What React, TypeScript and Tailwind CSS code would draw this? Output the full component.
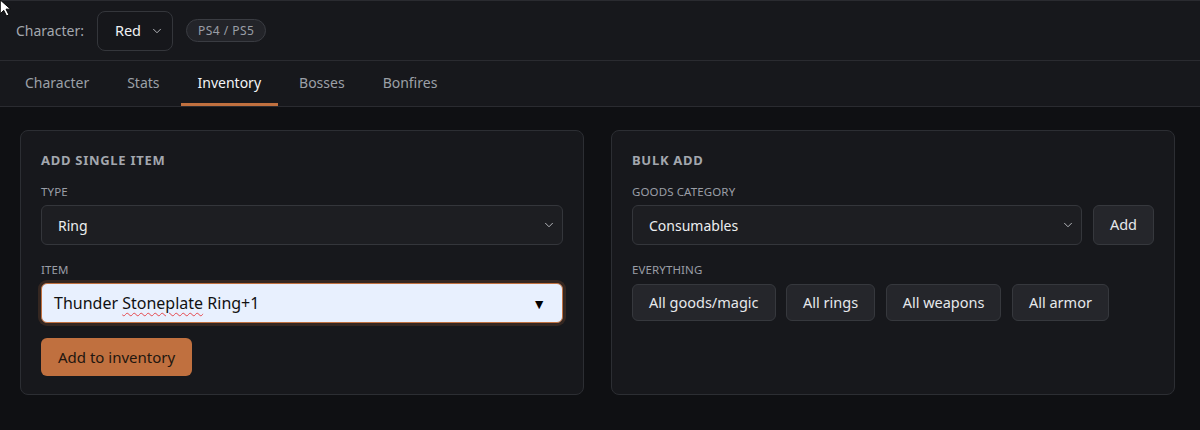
import { ChevronDown } from "lucide-react";

const tabs = ["Character", "Stats", "Inventory", "Bosses", "Bonfires"];

function FieldLabel({ children }: { children: React.ReactNode }) {
  return <div className="text-[11.5px] leading-4 uppercase text-[#9a9ea6] tracking-[0.01em]">{children}</div>;
}

function CardTitle({ children }: { children: React.ReactNode }) {
  return (
    <h2 className="text-[13px] leading-5 font-bold uppercase tracking-[0.055em] text-[#a3a7ae]">{children}</h2>
  );
}

function DarkSelect({ value, className = "" }: { value: string; className?: string }) {
  return (
    <div
      className={`h-10 flex items-center justify-between pl-4 pr-[6px] rounded-md border border-[#34363b] bg-[#1d1e22] text-[14px] text-[#eceef0] ${className}`}
    >
      <span>{value}</span>
      <ChevronDown className="size-3.5 text-[#c8cacf]" strokeWidth={1.5} />
    </div>
  );
}

function GhostButton({ children }: { children: React.ReactNode }) {
  return (
    <button className="h-[37px] px-4 rounded-md border border-[#36383d] bg-[#25262b] text-[14.5px] text-[#e6e8eb]">
      {children}
    </button>
  );
}

export default function App() {
  return (
    <div className="relative w-[1200px] h-[430px] bg-[#0f1013] overflow-hidden" style={{ fontFamily: '"Noto Sans", "Open Sans", sans-serif' }}>
      {/* mouse pointer overlay */}
      <svg className="absolute left-0 top-0" width="12" height="16" viewBox="0 0 10 14">
        <path d="M0 0 L0 12 L3 9 L5.5 14 L7.5 13 L5 8 L9 8 Z" fill="#fff" stroke="#000" strokeWidth="0.8" />
      </svg>

      {/* header */}
      <header className="h-[61px] border-t border-b border-[#2a2b30] bg-[#17181c] flex items-center pl-4 gap-[13px]">
        <span className="text-[14px] text-[#a3a7ae]">Character:</span>
        <div className="h-10 w-[76px] flex items-center justify-between pl-[17px] pr-2 rounded-lg border border-[#34363b] bg-[#16171b] text-[14.5px] text-[#f0f1f3]">
          <span>Red</span>
          <ChevronDown className="size-3.5 text-[#c8cacf]" strokeWidth={1.5} />
        </div>
        <span className="h-[23px] px-[11px] flex items-center rounded-full border border-[#3a3c42] bg-[#232429] text-[12px] tracking-[0.04em] text-[#9a9ea6]">
          PS4 / PS5
        </span>
      </header>

      {/* tabs */}
      <nav className="h-[46px] border-b border-[#2a2b30] bg-[#17181c] flex pl-2 gap-1">
        {tabs.map((t) => (
          <div
            key={t}
            className={`px-[17px] flex items-center text-[14px] border-b-[3px] ${
              t === "Inventory" ? "text-[#f3f4f6] border-[#c0703f]" : "text-[#9ca0a7] border-transparent"
            }`}
          >
            {t}
          </div>
        ))}
      </nav>

      {/* content */}
      <main className="grid grid-cols-2 gap-[27px] pl-5 pr-[25px] pt-[23px]">
        <section className="h-[265px] rounded-lg border border-[#2c2e33] bg-[#17181c] px-5 pt-[19px]">
          <CardTitle>Add single item</CardTitle>
          <div className="mt-[14px] flex flex-col gap-[5px]">
            <FieldLabel>Type</FieldLabel>
            <DarkSelect value="Ring" />
          </div>
          <div className="mt-[17px] flex flex-col gap-[5px]">
            <FieldLabel>Item</FieldLabel>
            <div className="h-10 flex items-center justify-between pl-3 pr-4 rounded-md border border-[#c0703f] bg-[#e8f0fe] text-[16px] text-[#111] shadow-[0_0_0_3px_rgba(192,112,63,0.18)]">
              <span>
                Thunder{" "}
                <span className="underline decoration-wavy decoration-[#e5484d] decoration-1 underline-offset-[3px]">Stoneplate</span>{" "}
                Ring+1
              </span>
              <span className="text-[14px] text-black">▼</span>
            </div>
          </div>
          <button className="mt-[15px] h-[38px] px-[17px] rounded-md bg-[#c0703f] text-[15px] text-[#22160f]">
            Add to inventory
          </button>
        </section>

        <section className="h-[265px] rounded-lg border border-[#2c2e33] bg-[#17181c] px-5 pt-[19px]">
          <CardTitle>Bulk add</CardTitle>
          <div className="mt-[14px] flex flex-col gap-[5px]">
            <FieldLabel>Goods category</FieldLabel>
            <div className="flex gap-[11px]">
              <DarkSelect value="Consumables" className="flex-1" />
              <button className="h-10 w-[61px] rounded-md border border-[#36383d] bg-[#25262b] text-[14.5px] text-[#e6e8eb]">
                Add
              </button>
            </div>
          </div>
          <div className="mt-[17px] flex flex-col gap-[6px]">
            <FieldLabel>Everything</FieldLabel>
            <div className="flex gap-[10.5px]">
              <GhostButton>All goods/magic</GhostButton>
              <GhostButton>All rings</GhostButton>
              <GhostButton>All weapons</GhostButton>
              <GhostButton>All armor</GhostButton>
            </div>
          </div>
        </section>
      </main>
    </div>
  );
}
